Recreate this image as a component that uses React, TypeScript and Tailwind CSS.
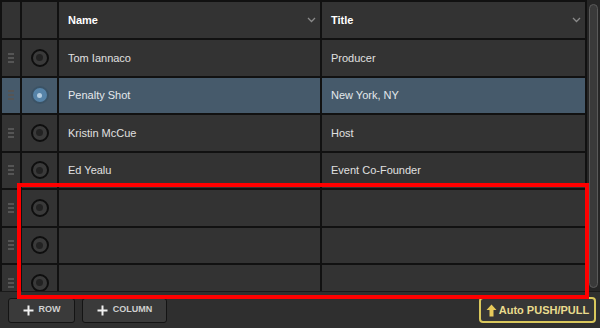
import React from "react";

const rows = [
  { name: "Tom Iannaco", title: "Producer" },
  { name: "Penalty Shot", title: "New York, NY", selected: true },
  { name: "Kristin McCue", title: "Host" },
  { name: "Ed Yealu", title: "Event Co-Founder" },
  { name: "", title: "" },
  { name: "", title: "" },
  { name: "", title: "" },
];

function Handle() {
  return (
    <div className="flex flex-col gap-[2px] w-[6px]">
      <div className="h-[2px] bg-[#555]" />
      <div className="h-[2px] bg-[#555]" />
      <div className="h-[2px] bg-[#555]" />
    </div>
  );
}

function Radio({ on }: { on?: boolean }) {
  if (on) {
    return (
      <div className="w-[18px] h-[18px] rounded-full border-2 border-[#3b5366] bg-[#5683a8] flex items-center justify-center">
        <div className="w-[5px] h-[5px] rounded-full bg-[#b5cde0]" />
      </div>
    );
  }
  return (
    <div className="w-[18px] h-[18px] rounded-full border-2 border-[#0e0e0e] bg-[#3a3a3a] flex items-center justify-center">
      <div className="w-[7px] h-[7px] rounded-full bg-[#222]" />
    </div>
  );
}

function Chevron() {
  return (
    <svg width="9" height="6" viewBox="0 0 9 6" className="shrink-0">
      <path d="M1 1 L4.5 4.5 L8 1" fill="none" stroke="#8a8a8a" strokeWidth="1.3" />
    </svg>
  );
}

export default function App() {
  return (
    <div
      className="relative w-[600px] h-[328px] bg-[#2c2c2c] overflow-hidden text-[#e0e0e0]"
      style={{ fontFamily: '"Liberation Sans", Arial, sans-serif' }}
    >
      <div className="flex h-[291px]">
        <div className="w-[587px] flex flex-col bg-[#111] pl-[2px] pt-[2px] overflow-hidden">
          {/* header */}
          <div className="flex h-[36px] shrink-0 gap-[2px]">
            <div className="w-[18px] bg-[#333]" />
            <div className="w-[35px] bg-[#333]" />
            <div className="w-[261px] bg-[#333] flex items-center justify-between pl-[9px] pr-[4px]">
              <span className="text-[11px] font-bold text-white">Name</span>
              <Chevron />
            </div>
            <div className="w-[263px] bg-[#333] flex items-center justify-between pl-[9px] pr-[4px]">
              <span className="text-[11px] font-bold text-white">Title</span>
              <Chevron />
            </div>
          </div>
          {rows.map((r, i) => (
            <div key={i} className="flex h-[35.5px] shrink-0 gap-[2px] mt-[2px]">
              <div className={`w-[18px] flex items-center justify-center ${r.selected ? "bg-[#465a6b]" : "bg-[#333]"}`}>
                <Handle />
              </div>
              <div className={`w-[35px] flex items-center justify-center ${r.selected ? "bg-[#465a6b]" : "bg-[#333]"}`}>
                <Radio on={r.selected} />
              </div>
              <div className={`w-[261px] flex items-center pl-[9px] text-[11px] ${r.selected ? "bg-[#465a6b] text-[#e4e8ec]" : "bg-[#333] text-[#e0e0e0]"}`}>
                {r.name}
              </div>
              <div className={`w-[263px] flex items-center pl-[9px] text-[11px] ${r.selected ? "bg-[#465a6b] text-[#e4e8ec]" : "bg-[#333] text-[#e0e0e0]"}`}>
                {r.title}
              </div>
            </div>
          ))}
        </div>
        {/* scrollbar */}
        <div className="w-[13px] bg-[#262626] pt-[4px] pb-[3px] pl-[2px] pr-[2px]">
          <div className="h-full rounded-[5px] border border-[#5a5a5a] bg-[#3a3a3a]" />
        </div>
      </div>
      {/* toolbar */}
      <div className="h-[37px] bg-[#2f2f2f] border-t border-[#1a1a1a] flex items-center pl-[8px] pr-[4px]">
        <button className="w-[67px] h-[25px] rounded-[3px] border border-[#141414] bg-[#3a3a3a] flex items-center justify-center gap-[5px] text-[9px] font-bold text-[#d0d0d0]">
          <svg width="11" height="11" viewBox="0 0 11 11"><path d="M5.5 0.5 V10.5 M0.5 5.5 H10.5" stroke="#f0f0f0" strokeWidth="2" /></svg>
          ROW
        </button>
        <button className="ml-[7px] w-[85px] h-[25px] rounded-[3px] border border-[#141414] bg-[#3a3a3a] flex items-center justify-center gap-[5px] text-[9px] font-bold text-[#d0d0d0]">
          <svg width="11" height="11" viewBox="0 0 11 11"><path d="M5.5 0.5 V10.5 M0.5 5.5 H10.5" stroke="#f0f0f0" strokeWidth="2" /></svg>
          COLUMN
        </button>
        <div className="flex-1" />
        <button className="w-[117px] h-[26px] rounded-[4px] border-2 border-[#d9c75c] bg-[#363636] flex items-center justify-center gap-[2px] text-[11px] font-bold text-[#e9dc8e]">
          <svg width="11" height="13" viewBox="0 0 11 13"><path d="M5.5 0.5 L10.5 6 H7.5 V12.5 H3.5 V6 H0.5 Z" fill="#e6c95a" /></svg>
          Auto PUSH/PULL
        </button>
      </div>
      {/* annotation */}
      <div className="absolute left-[17px] top-[183px] w-[572px] h-[116px] border-4 border-[#ff0000] pointer-events-none" />
    </div>
  );
}
